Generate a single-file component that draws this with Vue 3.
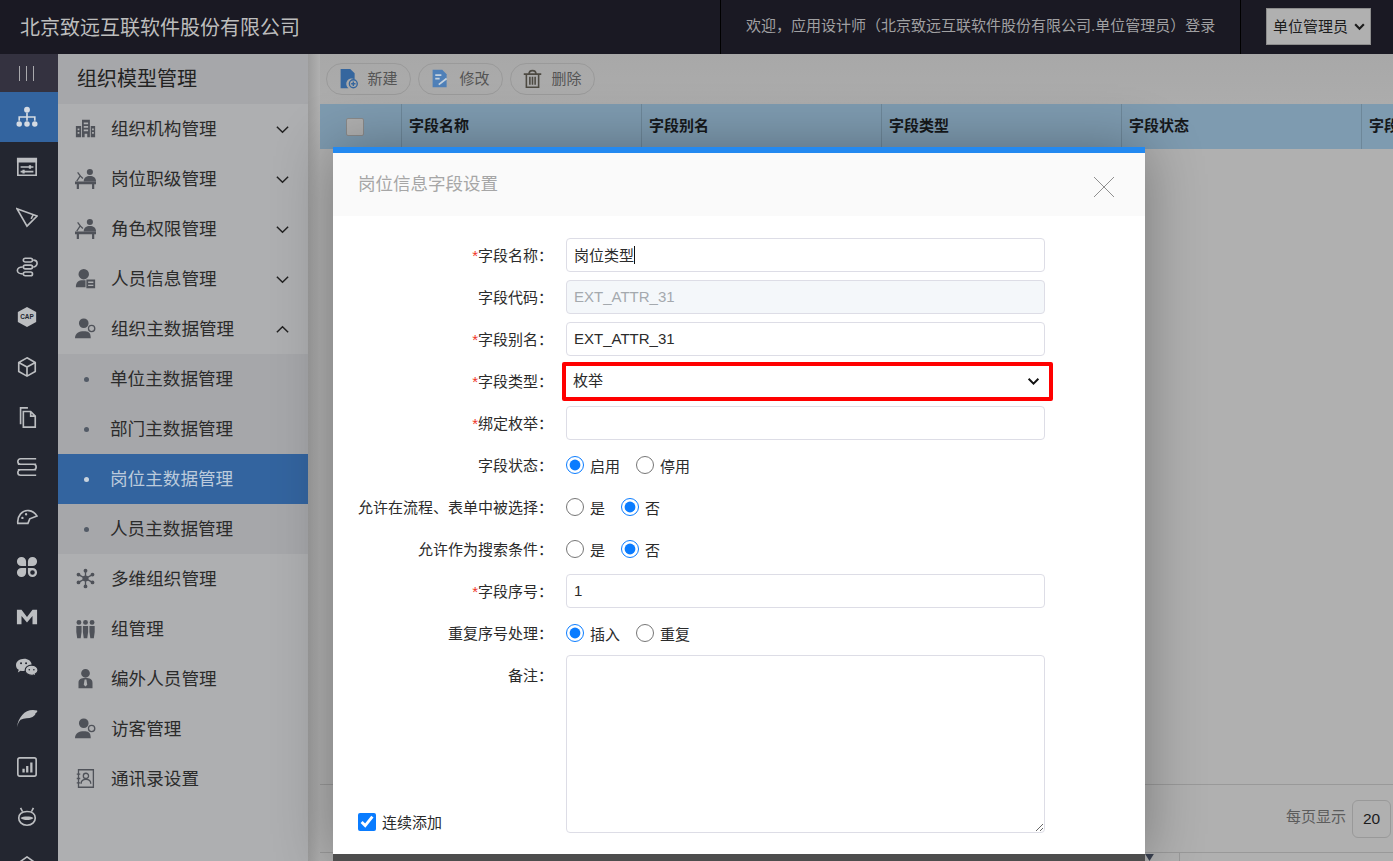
<script setup>
// circle as a path fragment, keeps the icon tables short
const c = (x, y, r) => `M${x - r} ${y}a${r} ${r} 0 1 0 ${2 * r} 0a${r} ${r} 0 1 0 ${-2 * r} 0z`

const railIcons = [
  { fill: c(12, 4, 3.2) + c(3.5, 19.5, 3) + c(12, 19.5, 3) + c(20.5, 19.5, 3), stroke: 'M12 7v9M3.500 16v-4h17v4' },
  { fill: 'M1 2h22v5H1zM14 10h2.500v4H14zM7 15h2.500v4H7z', stroke: 'M2 3h20v18H2zM5 12h14M5 17h14' },
  { stroke: 'M1 3l22 8-11 11zM19 9l-2.500 5' },
  { stroke: 'M10 2.500h6a2 2 0 010 4h-6a2 2 0 010-4zM10 10h6a2 2 0 010 4h-6a2 2 0 010-4zM10 17.500h6a2 2 0 010 4h-6a2 2 0 010-4zM19 4.500c3 0 4 2 4 3.700s-2 3.800-4 3.800M7 12c-3 0-5.500 1.500-5.500 3.700S4 19.500 7 19.500' },
  { fill: 'M12 1l10 5.500v11L12 23 2 17.500v-11z', label: 'CAP' },
  { stroke: 'M12 2l9 5v10l-9 5-9-5V7zM3 7l9 5 9-5M12 12v10' },
  { stroke: 'M8 6h8l5 5v12H8zM16 6v5h5M5 20V2h8' },
  { stroke: 'M22 3H5a3 3 0 000 6h17M2 9h17a3 3 0 010 6H2M22 15H5a3 3 0 000 6h17' },
  { fill: c(7, 13, 1.3) + c(11, 9, 1.3), stroke: 'M2 19C1 11 7 4 14 5c4 .5 7 3 9 6l-8 3-2 5z' },
  {
    fill: 'M6 1a5 5 0 015 5v5H6A5 5 0 016 1zM13 6a5 5 0 0110 0 5 5 0 01-5 5h-5zM6 13h5v5a5 5 0 01-10 0 5 5 0 015-5zM13 13h5a5 5 0 010 10 5 5 0 01-5-5z',
    dark: c(18, 18, 2.5)
  },
  { fill: 'M1 4h5l6 8 6-8h5v16h-5v-9l-6 7-6-7v9H1z' },
  {
    fill: 'M9 3C4 3 0 6 0 10c0 2 1 4 3 5l-1 3 3-2c1 .3 2 .4 3 .4 5 0 9-3 9-7S13 3 9 3z',
    over: 'M17 10c-4 0-7 2.500-7 5.500s3 5.500 7 5.500c.7 0 1.500-.1 2-.3l3 1.700-1-2.800c2-1 3-2.500 3-4.100 0-3-3-5.500-7-5.500z',
    dark: c(5.5, 8, 1.1) + c(11, 8, 1.1) + c(14.5, 15, .9) + c(19.5, 15, .9)
  },
  { fill: 'M1 23C3 11 11 2 23 5c1 1-1 3-2 3 1 1-1 3-3 4-4 2-9 1-13 3-2 2-3 5-4 8z' },
  { fill: 'M7 14h2.500v4H7zM11 11h2.500v7H11zM15.500 7H18v11h-2.500z', stroke: 'M4 2h16a2 2 0 012 2v16a2 2 0 01-2 2H4a2 2 0 01-2-2V4a2 2 0 012-2z' },
  { fill: 'M5 13c3-2 11-2 14 0-3 3-11 3-14 0z', stroke: 'M12 6c6 0 9 3 9 7s-3 8-9 8-9-4-9-8 3-7 9-7zM7 6L5 2M17 6l2-4' },
  { stroke: 'M12 1L2 8v14h20V8z' }
]

const icons = {
  building: { rule: 'evenodd', fill: 'M8 2h9v20h-3v-4h-3v4H8zM10 5v2h5V5zM10 9v2h5V9zM10 13v2h5v-2zM1 9h6v13H1zM3 12v2h2v-2zM3 16v2h2v-2zM18 9h5v13h-5zM19.500 12v2h2v-2zM19.500 16v2h2v-2z' },
  desk: {
    fill: c(17, 4.5, 3.5) + 'M10 15c0-4 3-6 7-6s7 2 7 6zM0 15.500h24v3H0zM2 18.500h2.500V24H2zM19.500 18.500H22V24h-2.500z',
    stroke: 'M2 15l4-6-3-4M6 9l3 3'
  },
  card: { rule: 'evenodd', fill: c(10, 7, 6) + 'M1 22c0-6 3-8 8-8h3v8zM13 13h10v10H13zM15 15.500v1.500h6v-1.500zM15 19v1.500h6V19z' },
  visitor: {
    fill: c(10, 6, 5.5) + 'M0 23c0-6 5-8 10-8s8 1 8 8z',
    stroke: c(19, 12, 3.6)
  },
  network: { fill: c(12, 12, 3.5) + c(12, 3, 2.2) + c(12, 21, 2.2) + c(4, 7.5, 2.2) + c(20, 7.5, 2.2) + c(4, 16.5, 2.2) + c(20, 16.5, 2.2), stroke: 'M12 3v18M4 7.500l16 9M20 7.500l-16 9' },
  group: { fill: c(4.5, 5, 2.8) + c(12, 5, 2.8) + c(19.5, 5, 2.8) + 'M1.500 9h6v7l-1 7h-4l-1-7zM9 9h6v7l-1 7h-4l-1-7zM16.500 9h6v7l-1 7h-4l-1-7z' },
  staff: { rule: 'evenodd', fill: c(12, 6, 5) + 'M4 23v-6c0-4 3-5.500 8-5.500s8 1.500 8 5.500v6zM11 13l-1 6 2 2 2-2-1-6z' },
  contact: { stroke: 'M4 2h17v20H4zM2 7h4M2 12h4M2 17h4M15.500 9a3 3 0 11-6 0 3 3 0 016 0zM7 18c0-4 3-5 5.500-5s5.500 1 5.500 5' }
}

const menus = [
  { name: '组织机构管理', icon: 'building', arrow: 'down' },
  { name: '岗位职级管理', icon: 'desk', arrow: 'down' },
  { name: '角色权限管理', icon: 'desk', arrow: 'down' },
  { name: '人员信息管理', icon: 'card', arrow: 'down' },
  {
    name: '组织主数据管理',
    icon: 'visitor',
    arrow: 'up',
    children: ['单位主数据管理', '部门主数据管理', '岗位主数据管理', '人员主数据管理']
  },
  { name: '多维组织管理', icon: 'network' },
  { name: '组管理', icon: 'group' },
  { name: '编外人员管理', icon: 'staff' },
  { name: '访客管理', icon: 'visitor' },
  { name: '通讯录设置', icon: 'contact' }
]

const columns = ['字段名称', '字段别名', '字段类型', '字段状态', '字段']
</script>

<template>
  <div class="page">
    <header class="topbar">
      <div class="brand">北京致远互联软件股份有限公司</div>
      <div class="welcome">欢迎，应用设计师（北京致远互联软件股份有限公司.单位管理员）登录</div>
      <div class="role-wrap">
        <div class="role">
          <span>单位管理员</span>
          <svg class="chev-sm" viewBox="0 0 12 12"><path d="M2 4l4 4 4-4" /></svg>
        </div>
      </div>
    </header>

    <div class="layout">
      <nav class="rail">
        <div class="rail-toggle"><span></span><span></span><span></span></div>
        <div v-for="(ic, i) in railIcons" :key="i" class="rail-item" :class="{ on: i === 0 }">
          <svg viewBox="0 0 24 24" class="rail-icon">
            <path v-if="ic.fill" :d="ic.fill" class="f" />
            <path v-if="ic.stroke" :d="ic.stroke" class="s" />
            <path v-if="ic.over" :d="ic.over" class="o" />
            <path v-if="ic.dark" :d="ic.dark" class="d" />
            <text v-if="ic.label" x="12" y="14.400" class="cap">{{ ic.label }}</text>
          </svg>
        </div>
      </nav>

      <aside class="side">
        <div class="side-title">组织模型管理</div>
        <template v-for="m in menus" :key="m.name">
          <div class="menu">
            <svg viewBox="0 0 24 24" class="menu-icon">
              <path v-if="icons[m.icon].fill" :d="icons[m.icon].fill" :fill-rule="icons[m.icon].rule" class="f" />
              <path v-if="icons[m.icon].stroke" :d="icons[m.icon].stroke" class="s" />
            </svg>
            <span class="menu-name">{{ m.name }}</span>
            <svg v-if="m.arrow" viewBox="0 0 16 16" class="chev">
              <path :d="m.arrow === 'down' ? 'M2 5l6 6 6-6' : 'M2 11l6-6 6 6'" />
            </svg>
          </div>
          <div v-if="m.children" class="sub">
            <div v-for="s in m.children" :key="s" class="sub-item" :class="{ on: s === '岗位主数据管理' }">
              <i class="dot"></i><span class="sub-name">{{ s }}</span>
            </div>
          </div>
        </template>
      </aside>

      <main class="main">
        <div class="toolbar">
          <button class="tool">
            <svg viewBox="0 0 24 24" class="tool-icon">
              <path d="M3 1h11l5 5v7a6 6 0 00-7 10H3z" fill="#35669e" />
              <path :d="c(17.5, 18, 4.5) + 'M15 18h5M17.500 15.500v5'" fill="none" stroke="#35669e" stroke-width="1.600" />
            </svg><span>新建</span>
          </button>
          <button class="tool">
            <svg viewBox="0 0 24 24" class="tool-icon">
              <path d="M3 2h11l5 5v15H3z" fill="#4f80b8" />
              <path d="M6 8h7M6 12h5M10 19l9-7" fill="none" stroke="#c6d2de" stroke-width="2" />
            </svg><span>修改</span>
          </button>
          <button class="tool">
            <svg viewBox="0 0 24 24" class="tool-icon">
              <path d="M2 7h20M5 7v15h14V7M9 10v9M12 10v9M15 10v9M8 7c0-3 2-4 4-4s4 1 4 4" fill="none" stroke="#4d4a42" stroke-width="1.800" />
            </svg><span>删除</span>
          </button>
        </div>
        <div class="thead">
          <div class="th-check"><span class="fake-check"></span></div>
          <div v-for="col in columns" :key="col" class="th">{{ col }}</div>
        </div>
        <div class="tbody"></div>
        <div class="pager">
          <span class="pager-text">每页显示</span>
          <span class="page-size">20</span>
        </div>
        <div class="pager-foot">
          <svg viewBox="0 0 10 8" class="foot-arrow"><path d="M0 0h10L5 8z" /></svg>
          <i class="foot-line"></i>
        </div>
      </main>
    </div>

    <section class="modal">
      <div class="modal-head">
        <span class="modal-title">岗位信息字段设置</span>
        <svg viewBox="0 0 20 20" class="close"><path d="M0 0l20 20M20 0L0 20" /></svg>
      </div>
      <div class="modal-body">
        <div class="row">
          <label class="lbl"><em>*</em>字段名称：</label>
          <div class="field">
            <input class="ipt" value="岗位类型" readonly />
            <i class="caret"></i>
          </div>
        </div>
        <div class="row">
          <label class="lbl">字段代码：</label>
          <div class="field"><input class="ipt off" value="EXT_ATTR_31" disabled /></div>
        </div>
        <div class="row">
          <label class="lbl"><em>*</em>字段别名：</label>
          <div class="field"><input class="ipt" value="EXT_ATTR_31" readonly /></div>
        </div>
        <div class="row">
          <label class="lbl"><em>*</em>字段类型：</label>
          <div class="field">
            <select class="ipt pick"><option>枚举</option></select>
            <svg viewBox="0 0 12 12" class="pick-arrow"><path d="M1.500 3.500L6 8l4.500-4.500" /></svg>
            <i class="mark"></i>
          </div>
        </div>
        <div class="row">
          <label class="lbl"><em>*</em>绑定枚举：</label>
          <div class="field"><input class="ipt" readonly /></div>
        </div>
        <div class="row">
          <label class="lbl">字段状态：</label>
          <div class="radios">
            <label><input type="radio" name="state" checked /><span>启用</span></label>
            <label><input type="radio" name="state" /><span>停用</span></label>
          </div>
        </div>
        <div class="row">
          <label class="lbl">允许在流程、表单中被选择：</label>
          <div class="radios">
            <label><input type="radio" name="pick" /><span>是</span></label>
            <label><input type="radio" name="pick" checked /><span>否</span></label>
          </div>
        </div>
        <div class="row">
          <label class="lbl">允许作为搜索条件：</label>
          <div class="radios">
            <label><input type="radio" name="search" /><span>是</span></label>
            <label><input type="radio" name="search" checked /><span>否</span></label>
          </div>
        </div>
        <div class="row">
          <label class="lbl"><em>*</em>字段序号：</label>
          <div class="field"><input class="ipt" value="1" readonly /></div>
        </div>
        <div class="row">
          <label class="lbl">重复序号处理：</label>
          <div class="radios">
            <label><input type="radio" name="dup" checked /><span>插入</span></label>
            <label><input type="radio" name="dup" /><span>重复</span></label>
          </div>
        </div>
        <div class="row row-note">
          <label class="lbl">备注：</label>
          <textarea class="note"></textarea>
        </div>
        <label class="keep"><input type="checkbox" checked /><span>连续添加</span></label>
      </div>
      <div class="modal-foot"></div>
    </section>
  </div>
</template>

<style>
html,
body {
  margin: 0;
  overflow: hidden;
}
</style>

<style scoped>
.page {
  position: relative;
  height: 861px;
  overflow: hidden;
  display: flex;
  flex-direction: column;
  background: #b0b0b0;
  font-family: "Liberation Sans", "Noto Sans CJK SC", sans-serif;
  color: #2b2b2b;
}

.topbar {
  height: 54px;
  flex: none;
  display: flex;
  align-items: center;
  background: #1a1923;
}
.brand {
  flex: 1;
  padding-left: 20px;
  margin-bottom: 2px;
  font-size: 20px;
  color: #bdbdbd;
}
.welcome {
  width: 521px;
  height: 54px;
  box-sizing: border-box;
  padding-left: 25px;
  line-height: 52px;
  font-size: 15px;
  color: #a0a0a2;
  border-left: 1px solid #000;
  border-right: 1px solid #000;
  white-space: nowrap;
}
.role-wrap {
  width: 152px;
  padding-left: 25px;
  box-sizing: border-box;
  margin-bottom: 1px;
}
.role {
  width: 105px;
  height: 37px;
  box-sizing: border-box;
  display: flex;
  align-items: center;
  gap: 5px;
  padding-left: 6px;
  font-size: 15px;
  color: #1c1c1c;
  background: #b0b0b0;
  border: 1px solid #8c8c8c;
}
.role span {
  margin-bottom: 2px;
}
.chev-sm {
  width: 13px;
  height: 13px;
}
.chev-sm path {
  fill: none;
  stroke: #1c1c1c;
  stroke-width: 2;
}

.layout {
  flex: 1;
  min-height: 0;
  display: flex;
}

.rail {
  width: 58px;
  flex: none;
  background: #232630;
}
.rail-toggle {
  height: 38px;
  box-sizing: border-box;
  padding-right: 5px;
  display: flex;
  justify-content: center;
  align-items: center;
  gap: 6px;
  background: #343240;
}
.rail-toggle span {
  width: 1px;
  height: 15px;
  background: #a9a9ad;
}
.rail-item {
  height: 50px;
  box-sizing: border-box;
  padding-right: 4px;
  display: flex;
  align-items: center;
  justify-content: center;
}
.rail-item.on {
  background: #33649f;
}
.rail-icon {
  width: 22px;
  height: 22px;
}
.rail-icon .f {
  fill: #bcbec1;
}
.rail-icon .s {
  fill: none;
  stroke: #bcbec1;
  stroke-width: 1.800;
}
.rail-icon .o {
  fill: #bcbec1;
  stroke: #232630;
  stroke-width: 1.200;
}
.rail-icon .d {
  fill: #232630;
}
.rail-item.on .f {
  fill: #d5dbe3;
}
.rail-item.on .s {
  stroke: #d5dbe3;
}
.cap {
  font-size: 7px;
  font-weight: 700;
  text-anchor: middle;
  fill: #232630;
}

.side {
  width: 250px;
  flex: none;
  background: #aeafb1;
}
.side-title {
  height: 50px;
  line-height: 51px;
  padding-left: 19px;
  font-size: 20px;
  color: #222;
  background: #a6a7aa;
}
.menu {
  height: 50px;
  display: flex;
  align-items: center;
  padding-left: 17px;
  font-size: 17.600px;
}
.menu-icon {
  width: 21px;
  height: 21px;
  flex: none;
  margin-bottom: 2px;
}
.menu-icon .f {
  fill: #4f5259;
}
.menu-icon .s {
  fill: none;
  stroke: #4f5259;
  stroke-width: 1.500;
}
.menu-name {
  margin-left: 15px;
  margin-bottom: 4px;
  flex: 1;
}
.chev {
  width: 15px;
  height: 15px;
  margin-right: 18px;
}
.chev path {
  fill: none;
  stroke: #222;
  stroke-width: 1.600;
}
.sub {
  background: #a6a7aa;
}
.sub-item {
  height: 50px;
  display: flex;
  align-items: center;
  padding-left: 26px;
  font-size: 17.600px;
}
.sub-name {
  margin-bottom: 4px;
}
.sub-item.on {
  background: #33649f;
  color: #bccbdc;
}
.dot {
  width: 5px;
  height: 5px;
  margin-right: 21px;
  border-radius: 50%;
  background: #525a66;
}
.sub-item.on .dot {
  background: #c9d3de;
}

.main {
  flex: 1;
  min-width: 0;
  display: flex;
  flex-direction: column;
  padding-left: 12px;
  background: linear-gradient(90deg, #9c9c9c, #b0b0b0 12px);
}
.toolbar {
  height: 50px;
  flex: none;
  box-sizing: border-box;
  display: flex;
  gap: 7px;
  padding: 9px 0 0 6px;
  background: linear-gradient(#a8a8a8, #acacac);
}
.tool {
  width: 85px;
  height: 32px;
  box-sizing: border-box;
  display: flex;
  align-items: center;
  justify-content: center;
  gap: 8px;
  padding: 0 1px 0 0;
  font: inherit;
  font-size: 15px;
  color: #555;
  background: transparent;
  border: 1px solid #9a9a9a;
  border-radius: 16px;
}
.tool span {
  margin-bottom: 4px;
}
.tool-icon {
  width: 21px;
  height: 21px;
  margin-bottom: 1px;
}
.thead {
  height: 45px;
  flex: none;
  display: flex;
  background: #7e9bb0;
}
.th-check {
  width: 81px;
  flex: none;
  display: flex;
  align-items: center;
  padding-left: 26px;
  box-sizing: border-box;
}
.fake-check {
  width: 18px;
  height: 18px;
  box-sizing: border-box;
  background: #b0b0b0;
  border: 1px solid #8a8a8a;
  border-radius: 2px;
}
.th {
  width: 240px;
  flex: none;
  box-sizing: border-box;
  padding-left: 7px;
  line-height: 43px;
  font-size: 15px;
  font-weight: 700;
  color: #16181b;
  border-left: 1px solid #6d8799;
}
.tbody {
  flex: 1;
}
.pager {
  height: 69px;
  flex: none;
  box-sizing: border-box;
  display: flex;
  align-items: center;
  justify-content: flex-end;
  gap: 6px;
  padding-right: 2px;
  font-size: 15px;
  color: #5c5c5c;
  border-top: 1px solid #999;
  border-bottom: 1px solid #999;
}
.pager-text {
  margin-bottom: 6px;
}
.page-size {
  width: 39px;
  height: 38px;
  box-sizing: border-box;
  display: flex;
  align-items: center;
  justify-content: center;
  font-size: 15.500px;
  color: #1c1c1c;
  border: 1px solid #999;
  border-radius: 6px;
}
.pager-foot {
  height: 8px;
  flex: none;
  display: flex;
}
.foot-arrow {
  width: 9px;
  height: 7px;
  margin: 1px 0 0 825px;
}
.foot-arrow path {
  fill: #3a4150;
}
.foot-line {
  width: 1px;
  margin-left: 25px;
  background: #999;
}

.modal {
  position: absolute;
  left: 333px;
  top: 147px;
  width: 812px;
  height: 714px;
  display: flex;
  flex-direction: column;
  background: #fff;
  border-top: 6px solid #2389f0;
  box-sizing: border-box;
  box-shadow: 0 0 55px rgba(0, 0, 0, 0.32);
}
.modal-head {
  height: 63px;
  flex: none;
  display: flex;
  align-items: center;
  justify-content: space-between;
  padding: 0 31px 0 25px;
  font-size: 17.500px;
  color: #a6a6a6;
  background: #fafafa;
}
.modal-title {
  margin-bottom: 4px;
}
.close {
  width: 20px;
  height: 20px;
  margin-top: 5px;
}
.close path {
  fill: none;
  stroke: #8f8f8f;
  stroke-width: 1;
}
.modal-body {
  position: relative;
  flex: 1;
  min-height: 0;
  display: flex;
  flex-direction: column;
  gap: 8px;
  padding-top: 22px;
  font-size: 15px;
  color: #2b2b2b;
}
.modal-foot {
  height: 7px;
  flex: none;
  background: #4d4d4d;
}
.row {
  display: flex;
  align-items: center;
  min-height: 34px;
}
.lbl {
  width: 220px;
  margin-right: 13px;
  margin-bottom: 2px;
  flex: none;
  text-align: right;
  white-space: nowrap;
}
.lbl em {
  font-style: normal;
  color: #f0341f;
}
.field {
  position: relative;
  width: 479px;
  height: 34px;
}
.ipt {
  width: 100%;
  height: 34px;
  box-sizing: border-box;
  padding: 0 7px 2px;
  font: inherit;
  color: #2b2b2b;
  background: #fff;
  border: 1px solid #dddde6;
  border-radius: 4px;
  outline: none;
}
.ipt.off {
  color: #a4a9ae;
  background: #f4f7fa;
}
.pick {
  appearance: none;
  padding-left: 6px;
  border-color: transparent;
}
.pick-arrow {
  position: absolute;
  right: 5px;
  top: 11px;
  width: 13px;
  height: 13px;
  pointer-events: none;
}
.pick-arrow path {
  fill: none;
  stroke: #111;
  stroke-width: 1.800;
}
.mark {
  position: absolute;
  left: -4px;
  right: -8px;
  top: -2px;
  bottom: -3px;
  border: 4px solid #f00;
  border-radius: 2px;
  pointer-events: none;
}
.caret {
  position: absolute;
  left: 68px;
  top: 8px;
  width: 1px;
  height: 18px;
  background: #111;
}
.radios {
  display: flex;
  gap: 16px;
}
.radios label,
.keep {
  display: flex;
  align-items: center;
  gap: 6px;
}
.radios input,
.keep input {
  width: 18px;
  height: 18px;
  margin: 0;
  accent-color: #0a7cff;
}
.row-note {
  align-items: flex-start;
  margin-top: -3px;
}
.row-note .lbl {
  line-height: 42px;
}
.note {
  width: 479px;
  height: 178px;
  box-sizing: border-box;
  border: 1px solid #dddde6;
  border-radius: 4px;
  outline: none;
  font: inherit;
}
.keep {
  position: absolute;
  left: 25px;
  bottom: 22px;
  font-size: 15px;
}
</style>
